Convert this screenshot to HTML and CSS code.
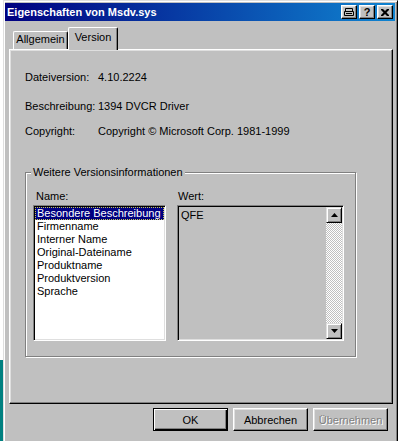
FILE: index.html
```html
<!doctype html>
<html>
<head>
  <meta charset="utf8">
  <title> Eigenschaften von Msdv.sys </title>
  <link rel="stylesheet" href="styles.css">
</head>
<body>
  <div class="desk"></div>
  <div class="window">
    <div class="titlebar">
      <span class="title">Eigenschaften von Msdv.sys</span>
      <div class="tbuttons">
        <span class="tbtn">
          <svg width="10" height="8" viewBox="0 0 10 8">
            <path d="M1.5 0.5h7v3h-7z M0.5 3.5h9v4h-9z" fill="none" stroke="#000"/>
            <path d="M2 5h6v1h-6z" fill="#000"/>
          </svg>
        </span>
        <span class="tbtn help">?</span>
        <span class="tbtn">
          <svg width="8" height="7" viewBox="0 0 8 7">
            <path d="M0 0h2l2 2 2-2h2v1l-2.5 2.5 2.5 2.5v1h-2l-2-2-2 2h-2v-1l2.5-2.5-2.5-2.5z" fill="#000"/>
          </svg>
        </span>
      </div>
    </div>

    <div class="tabs">
      <div class="tab">Allgemein</div>
      <div class="tab active">Version</div>
    </div>

    <div class="panel">
      <div class="row"><span class="lbl">Dateiversion:</span><span>4.10.2224</span></div>
      <div class="row r2"><span class="lbl">Beschreibung:</span><span>1394 DVCR Driver</span></div>
      <div class="row r3"><span class="lbl">Copyright:</span><span>Copyright &copy; Microsoft Corp. 1981-1999</span></div>

      <fieldset class="group">
        <legend>Weitere Versionsinformationen</legend>
        <div class="cols">
          <div class="col names">
            <div class="caption">Name:</div>
            <div class="listbox">
              <div class="item selected">Besondere Beschreibung des Herstellers</div>
              <div class="item">Firmenname</div>
              <div class="item">Interner Name</div>
              <div class="item">Original-Dateiname</div>
              <div class="item">Produktname</div>
              <div class="item">Produktversion</div>
              <div class="item">Sprache</div>
            </div>
          </div>
          <div class="col values">
            <div class="caption">Wert:</div>
            <div class="valuebox">
              <div class="valtext">QFE</div>
              <div class="vscroll">
                <span class="sbtn">
                  <svg width="7" height="4" viewBox="0 0 7 4"><path d="M3.5 0L7 4H0z" fill="#000"/></svg>
                </span>
                <span class="track"></span>
                <span class="sbtn">
                  <svg width="7" height="4" viewBox="0 0 7 4"><path d="M0 0h7L3.5 4z" fill="#000"/></svg>
                </span>
              </div>
            </div>
          </div>
        </div>
      </fieldset>
    </div>

    <div class="actions">
      <button class="btn default">OK</button>
      <button class="btn">Abbrechen</button>
      <button class="btn disabled">Übernehmen</button>
    </div>
  </div>
</body>
</html>
```

FILE: styles.css
```css
html, body {
  width: 100%;
  height: 100%;
  overflow: hidden;
  margin: 0px;
  padding: 0px;
  background: #fff;
  font-family: 'Liberation Sans', Arial, sans-serif;
  font-size: 11px;
  line-height: 13px;
  color: #000;
}
body {
  display: flex;
}
.desk {
  flex: none;
  width: 3px;
  background: linear-gradient(#fff 0 360px, #008080 360px);
}
.window {
  flex: none;
  box-sizing: border-box;
  width: 395px;
  height: 446px;
  padding: 2px 2px 0 1px;
  border: 1px solid;
  border-color: #dfdfdf #000 #000 #dfdfdf;
  box-shadow: inset 1px 1px #fff, inset -1px -1px #808080;
  background: #c0c0c0;
}

/* title bar */
.titlebar {
  display: flex;
  align-items: center;
  height: 18px;
  background: linear-gradient(to right, #000080, #1084d0);
  color: #fff;
}
.title {
  flex: 1;
  font-weight: bold;
  line-height: 17px;
  padding: 1px 0 0 2px;
}
.tbuttons {
  display: flex;
  gap: 2px;
  margin-right: 2px;
}
.tbtn {
  display: flex;
  align-items: center;
  justify-content: center;
  box-sizing: border-box;
  width: 16px;
  height: 14px;
  border: 1px solid;
  border-color: #fff #000 #000 #fff;
  box-shadow: inset -1px -1px #808080, inset 1px 1px #dfdfdf;
  background: #c0c0c0;
  color: #000;
}
.tbtn.help {
  font-weight: bold;
  font-size: 11px;
  line-height: 12px;
}

/* tabs */
.tabs {
  display: flex;
  align-items: flex-end;
  height: 22px;
  margin-top: 6px;
  padding-left: 8px;
}
.tab {
  box-sizing: border-box;
  width: 55px;
  height: 18px;
  padding-top: 1px;
  text-align: center;
  border-top: 1px solid #fff;
  border-left: 1px solid #fff;
  border-right: 1px solid #000;
  border-radius: 2px 2px 0 0;
  box-shadow: inset -1px 0 #808080;
}
.tab.active {
  position: relative;
  z-index: 1;
  width: 50px;
  height: 23px;
  margin-bottom: -1px;
  padding-top: 3px;
  background: #c0c0c0;
}

/* page */
.panel {
  box-sizing: border-box;
  width: 384px;
  height: 355px;
  margin-left: 4px;
  padding: 21px 0 0 15px;
  border: 1px solid;
  border-color: #fff #000 #000 #fff;
  box-shadow: inset -1px -1px #808080, inset 1px 1px #dfdfdf;
}
.row {
  display: flex;
  white-space: nowrap;
}
.row .lbl {
  width: 73px;
}
.r2 { margin-top: 16px; }
.r3 { margin-top: 12px; }

.group {
  box-sizing: border-box;
  width: 331px;
  margin: 28px 0 0 0;
  padding: 11px 10px 15px 7px;
  border: 1px solid #808080;
  box-shadow: 1px 1px #fff, inset 1px 1px #fff;
}
.group legend {
  margin-left: -2px;
  padding: 0 2px;
  background: #c0c0c0;
}
.cols {
  display: flex;
  gap: 11px;
}
.caption {
  margin-bottom: 2px;
}
.names .caption { padding-left: 3px; }
.values .caption { padding-left: 1px; }

.listbox, .valuebox {
  box-sizing: border-box;
  height: 136px;
  padding: 1px;
  border: 1px solid;
  border-color: #808080 #fff #fff #808080;
  box-shadow: inset 1px 1px #000, inset -1px -1px #dfdfdf;
  overflow: hidden;
}
.listbox {
  width: 133px;
  background: #fff;
}
.item {
  padding-left: 2px;
  white-space: nowrap;
  overflow: hidden;
}
.item.selected {
  background: #000080;
  color: #fff;
  outline: 1px dotted #c8c850;
  outline-offset: -1px;
}
.valuebox {
  display: flex;
  width: 167px;
  background: #c0c0c0;
}
.valtext {
  flex: 1;
  padding: 2px 0 0 2px;
}
.vscroll {
  display: flex;
  flex-direction: column;
  width: 16px;
}
.sbtn {
  display: flex;
  align-items: center;
  justify-content: center;
  box-sizing: border-box;
  height: 16px;
  border: 1px solid;
  border-color: #dfdfdf #000 #000 #dfdfdf;
  box-shadow: inset 1px 1px #fff, inset -1px -1px #808080;
  background: #c0c0c0;
}
.track {
  flex: 1;
  background: repeating-conic-gradient(#c0c0c0 0 25%, #fff 0 50%) 0 0 / 2px 2px;
}

/* buttons */
.actions {
  display: flex;
  justify-content: flex-end;
  gap: 5px;
  padding: 4px 7px 0 0;
}
.btn {
  box-sizing: border-box;
  width: 75px;
  height: 23px;
  padding: 2px 0 0 0;
  font: inherit;
  line-height: 19px;
  color: #000;
  background: #c0c0c0;
  border: 1px solid;
  border-color: #fff #000 #000 #fff;
  box-shadow: inset -1px -1px #808080, inset 1px 1px #dfdfdf;
}
.btn.default {
  border-color: #000;
  box-shadow: inset 1px 1px #fff, inset -1px -1px #000, inset -2px -2px #808080;
}
.btn.disabled {
  color: #808080;
  text-shadow: 1px 1px #fff;
}
```
